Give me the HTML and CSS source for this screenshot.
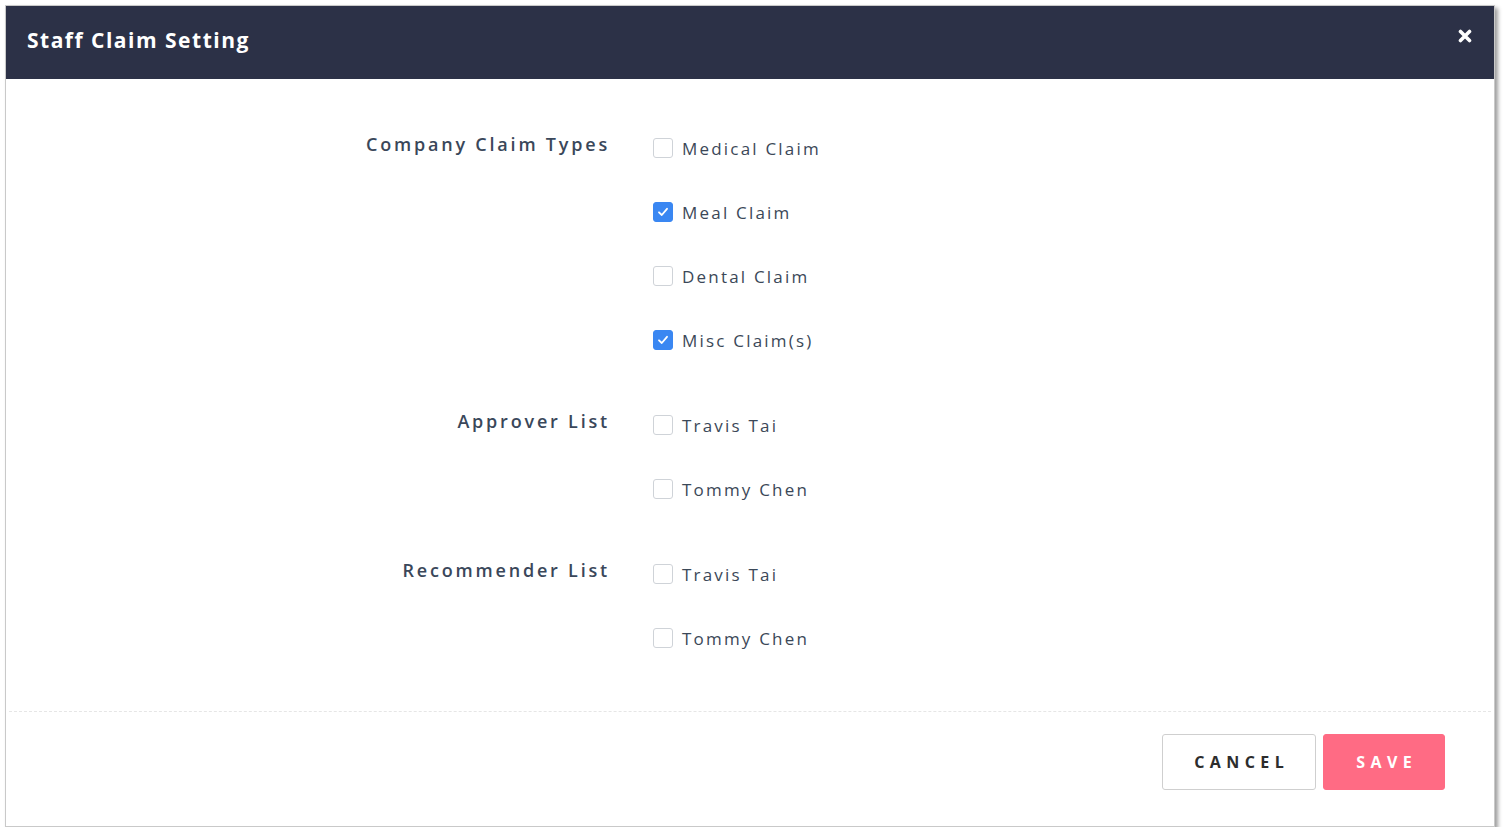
FILE: index.html
```html
<!DOCTYPE html>
<html>
<head>
<meta charset="utf-8">
<link rel="stylesheet" href="styles.css">
</head>
<body>
<div class="modal">
  <div class="modal-header">
    <h1 class="title">Staff Claim Setting</h1>
    <button class="close" aria-label="Close">
      <svg width="14" height="14" viewBox="0 0 14 14"><path d="M2.5 2.5 L11.5 11.5 M11.5 2.5 L2.5 11.5" stroke="#fff" stroke-width="3.6" stroke-linecap="round"/></svg>
    </button>
  </div>
  <div class="modal-body">
    <div class="group">
      <div class="group-label">Company Claim Types</div>
      <div class="options">
        <label class="option"><span class="box"></span><span class="text">Medical Claim</span></label>
        <label class="option"><span class="box checked"><svg width="14" height="14" viewBox="0 0 14 14"><path d="M3 7.3 L5.8 10 L11 3.8" fill="none" stroke="#fff" stroke-width="1.8" stroke-linecap="round" stroke-linejoin="round"/></svg></span><span class="text">Meal Claim</span></label>
        <label class="option"><span class="box"></span><span class="text">Dental Claim</span></label>
        <label class="option"><span class="box checked"><svg width="14" height="14" viewBox="0 0 14 14"><path d="M3 7.3 L5.8 10 L11 3.8" fill="none" stroke="#fff" stroke-width="1.8" stroke-linecap="round" stroke-linejoin="round"/></svg></span><span class="text">Misc Claim(s)</span></label>
      </div>
    </div>
    <div class="group">
      <div class="group-label">Approver List</div>
      <div class="options">
        <label class="option"><span class="box"></span><span class="text">Travis Tai</span></label>
        <label class="option"><span class="box"></span><span class="text">Tommy Chen</span></label>
      </div>
    </div>
    <div class="group">
      <div class="group-label">Recommender List</div>
      <div class="options">
        <label class="option"><span class="box"></span><span class="text">Travis Tai</span></label>
        <label class="option"><span class="box"></span><span class="text">Tommy Chen</span></label>
      </div>
    </div>
  </div>
  <div class="modal-footer">
    <button class="btn btn-cancel">CANCEL</button>
    <button class="btn btn-save">SAVE</button>
  </div>
</div>
</body>
</html>
```

FILE: styles.css
```css
* { box-sizing: border-box; }
html, body { margin: 0; padding: 0; background: #ffffff; }
body {
  font-family: "Open Sans", "Liberation Sans", sans-serif;
  color: #3b4858;
  padding: 5px 0 0 5px;
}
.modal {
  width: 1490px;
  height: 822px;
  border: 1px solid #c9c9c9;
  background: #fff;
  box-shadow: 3px 3px 4px rgba(0,0,0,0.38);
  display: flex;
  flex-direction: column;
}
.modal-header {
  height: 73px;
  background: #2c3147;
  display: flex;
  align-items: center;
  justify-content: space-between;
  padding: 0 22px 0 21px;
  flex-shrink: 0;
}
.title {
  margin: -5px 0 0 0;
  color: #fff;
  font-size: 21px;
  font-weight: 700;
  letter-spacing: 1.5px;
}
.close {
  background: none;
  border: 0;
  padding: 0;
  margin-top: -14px;
  width: 14px;
  height: 14px;
  display: flex;
}
.modal-body {
  flex: 1;
  padding: 53px 0 0 0;
  display: flex;
  flex-direction: column;
  gap: 53px;
  border-bottom: 1px dashed #e6e6e6;
  margin: 0 3px;
}
.group {
  display: grid;
  grid-template-columns: 600px 1fr;
  column-gap: 44px;
}
.group-label {
  text-align: right;
  font-size: 18px;
  font-weight: 600;
  letter-spacing: 2.8px;
  line-height: 24px;
  color: #3a475a;
  margin-right: -1px;
}
.options {
  display: flex;
  flex-direction: column;
  gap: 32px;
}
.option {
  height: 32px;
  display: flex;
  align-items: center;
  gap: 9px;
}
.box {
  width: 20px;
  height: 20px;
  border: 1px solid #cfd3d8;
  border-radius: 3px;
  background: #fff;
  display: flex;
  align-items: center;
  justify-content: center;
}
.box.checked {
  background: #3a87f2;
  border-color: #3a87f2;
}
.text {
  font-size: 17px;
  letter-spacing: 2.2px;
  color: #3b4858;
}
.modal-footer {
  flex-shrink: 0;
  display: flex;
  justify-content: flex-end;
  gap: 7px;
  padding: 22px 49px 36px 0;
}
.btn {
  height: 56px;
  border-radius: 3px;
  font-family: "Open Sans", "Liberation Sans", sans-serif;
  font-size: 16px;
  font-weight: 700;
  letter-spacing: 5.4px;
  padding: 0 0 0 5.4px;
}
.btn-cancel {
  width: 154px;
  background: #fff;
  border: 1px solid #cfcfcf;
  color: #2d2d2d;
}
.btn-save {
  width: 122px;
  background: #ff6b84;
  border: 1px solid #ff6b84;
  color: #fff;
}
```
